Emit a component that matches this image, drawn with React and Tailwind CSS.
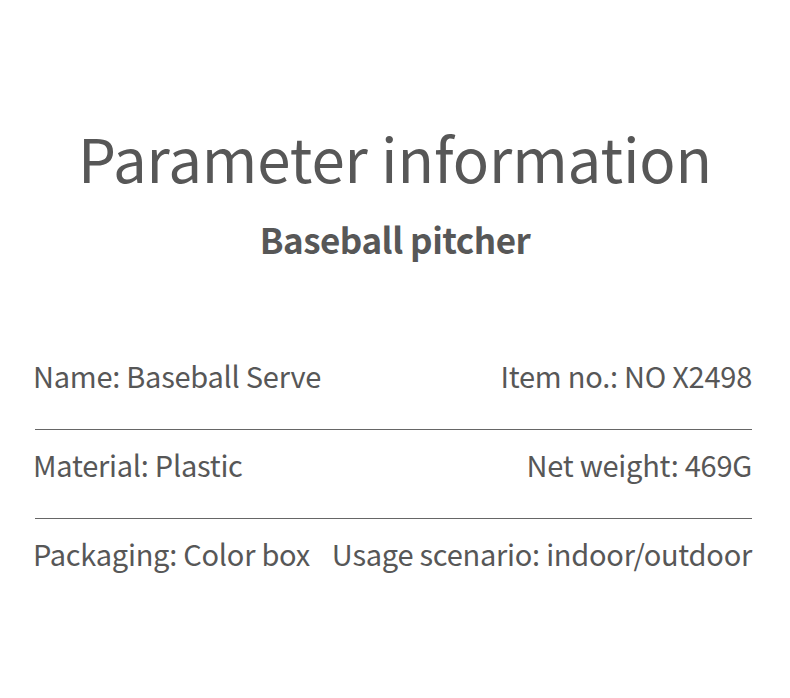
export default function App() {
  const rows = [
    ["Name: Baseball Serve", "Item no.: NO X2498"],
    ["Material: Plastic", "Net weight: 469G"],
    ["Packaging: Color box", "Usage scenario: indoor/outdoor"],
  ];
  return (
    <div
      className="w-[790px] h-[698px] bg-white text-[#575757] overflow-hidden"
      style={{ fontFamily: '"Noto Sans CJK SC", "Noto Sans", sans-serif' }}
    >
      <div className="pt-[121px] text-center">
        <h1 className="text-[60px] leading-[72px] tracking-[-0.1px]">Parameter information</h1>
        <h2 className="mt-[26px] text-[35px] leading-[40px] font-bold tracking-[-0.5px]">Baseball pitcher</h2>
      </div>
      <div className="mt-[82px] pl-[33px] pr-[38px]">
        {rows.map((r, i) => (
          <div key={i}>
            {i > 0 && <div className="h-px bg-[#666] ml-[2px]" />}
            <div className="flex justify-between h-[88px] pt-[16px] text-[29px] leading-[36px] tracking-[-0.25px]">
              <span>{r[0]}</span>
              <span>{r[1]}</span>
            </div>
          </div>
        ))}
      </div>
    </div>
  );
}
